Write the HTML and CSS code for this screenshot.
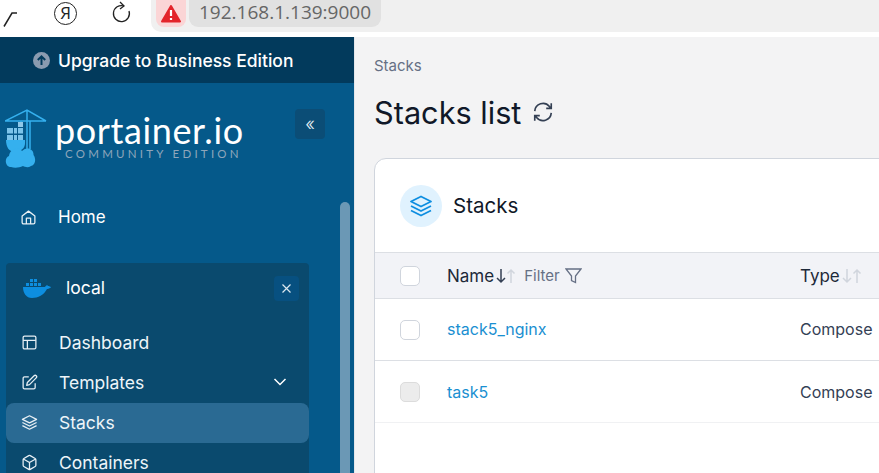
FILE: index.html
```html
<!DOCTYPE html>
<html lang="en">
<head>
  <meta charset="UTF-8" />
  <title>Portainer</title>
  <link rel="stylesheet" href="styles.css">
</head>
<body>

  <header class="browser-bar">
    <svg class="back-icon" width="16" height="18" viewBox="0 0 16 18"><path d="M1 16.500 L9 3 L14 3" fill="none" stroke="#222" stroke-width="1.500"/></svg>
    <span class="yandex">Я</span>
    <svg class="reload-icon" width="20" height="22" viewBox="0 0 20 22"><path d="M13 5 A8 8 0 1 0 18 10" fill="none" stroke="#222" stroke-width="1.300"/><path d="M9 1 L13 5 L9 8" fill="none" stroke="#222" stroke-width="1.300"/></svg>
    <div class="address">
      <span class="warn">
        <svg width="20" height="18" viewBox="0 0 20 18"><path d="M10 1 L19 16.500 H1 Z" fill="#e3242b" stroke="#e3242b" stroke-width="2" stroke-linejoin="round"/><path d="M10 5 V11 M10 13 V15" stroke="#fff" stroke-width="2.200"/></svg>
      </span>
      <span class="url">192.168.1.139:9000</span>
    </div>
  </header>

  <div class="app">
    <aside class="sidebar">
      <div class="upgrade">
        <svg width="17" height="17" viewBox="0 0 17 17"><circle cx="8.500" cy="8.500" r="8.500" fill="#8a9bb0"/><path d="M8.500 13 V4.500 M4.800 8 L8.500 4.300 L12.200 8" fill="none" stroke="#023a5c" stroke-width="2"/></svg>
        <span>Upgrade to Business Edition</span>
      </div>

      <div class="brand">
        <svg class="brand-mark" width="42" height="60" viewBox="0 0 42 60">
          <path d="M0 12 H41 M0 12 L22 1 L41 12 M22 1 V40 M25 12 V40" fill="none" stroke="#35b0ee" stroke-width="1.500"/>
          <path d="M16 12 V13" stroke="#35b0ee" stroke-width="1.200"/>
          <rect x="13" y="13" width="5" height="5" fill="#8fc8e8"/>
          <path d="M2 19 H8 V24.500 H2 Z M9 19 H12 V24.500 H9 Z M13 19 H18 V24.500 H13 Z M2 26 H8 V32 H2 Z M9 26 H12 V32 H9 Z M13 26 H18 V32 H13 Z" fill="#7cc4ea"/>
          <path d="M1 31 H20 C20.500 37 19 42 10 43 C4 43 1 38 1 31 Z" fill="#35b0ee"/>
          <path d="M6 58 C0 58 -1 49 4 47 C5 40 13 37 17 42 C22 37 29 40 28.500 46 C31 49 31 56 26 57 C23 59 20 58 18 57 C14 59 9 59 6 58 Z" fill="#35b0ee"/>
        </svg>
        <div class="brand-text">
          <div class="brand-name">portainer.io</div>
          <div class="brand-edition">COMMUNITY EDITION</div>
        </div>
        <button class="collapse">«</button>
      </div>

      <a class="nav-home">
        <svg class="ico" viewBox="0 0 24 24"><path d="M3 10 L12 3 L21 10 V19 A2 2 0 0 1 19 21 H5 A2 2 0 0 1 3 19 Z M9 21 V13 H15 V21"/></svg>
        <span>Home</span>
      </a>

      <div class="env">
        <div class="env-head">
          <svg class="whale" width="28" height="20" viewBox="0 0 28 20">
            <path d="M0 9 H22 C23 7 25 7 25 8 C26 8 27.500 8.500 28 9.500 C26 11 24.500 11 24 11 C21 17 15 20 9 20 C3 20 0 15 0 9 Z" fill="#0d8ee0"/>
            <path d="M3 5 H6 V8 H3 Z M7 5 H10 V8 H7 Z M11 5 H14 V8 H11 Z M15 5 H18 V8 H15 Z M7 1 H10 V4 H7 Z M11 1 H14 V4 H11 Z" fill="#0d8ee0"/>
          </svg>
          <span class="env-name">local</span>
          <button class="env-close">
            <svg width="11" height="11" viewBox="0 0 11 11"><path d="M1.500 1.500 L9.500 9.500 M9.500 1.500 L1.500 9.500" stroke="#dbe7ef" stroke-width="1.200"/></svg>
          </button>
        </div>

        <a class="nav-item">
          <svg class="ico" viewBox="0 0 24 24"><rect x="3" y="3" width="18" height="18" rx="2"/><path d="M3 9 H21 M9 9 V21"/></svg>
          <span>Dashboard</span>
        </a>
        <a class="nav-item">
          <svg class="ico" viewBox="0 0 24 24"><path d="M11 4 H5 A2 2 0 0 0 3 6 V19 A2 2 0 0 0 5 21 H18 A2 2 0 0 0 20 19 V13"/><path d="M18.500 2.500 A2.100 2.100 0 0 1 21.500 5.500 L12 15 L8 16 L9 12 Z"/></svg>
          <span>Templates</span>
          <svg class="chevron" width="14" height="8" viewBox="0 0 14 8"><path d="M1.500 1 L7 6.500 L12.500 1" fill="none" stroke="#fff" stroke-width="1.500"/></svg>
        </a>
        <a class="nav-item active">
          <svg class="ico" viewBox="0 0 24 24"><path d="M12 2.500 L22 7.500 L12 12.500 L2 7.500 Z M2 12 L12 17 L22 12 M2 16.500 L12 21.500 L22 16.500"/></svg>
          <span>Stacks</span>
        </a>
        <a class="nav-item">
          <svg class="ico" viewBox="0 0 24 24"><path d="M21 16 V8 A2 2 0 0 0 20 6.300 L13 2.300 A2 2 0 0 0 11 2.300 L4 6.300 A2 2 0 0 0 3 8 V16 A2 2 0 0 0 4 17.700 L11 21.700 A2 2 0 0 0 13 21.700 L20 17.700 A2 2 0 0 0 21 16 Z M3.300 7 L12 12 L20.700 7 M12 22 V12"/></svg>
          <span>Containers</span>
        </a>
      </div>

      <div class="scroll-thumb"></div>
    </aside>

    <main class="content">
      <div class="crumb">Stacks</div>
      <div class="title-row">
        <h1>Stacks list</h1>
        <svg class="refresh" width="22" height="22" viewBox="0 0 24 24"><path d="M3 11 A9 9 0 0 1 19 6 L21 8 M21 2.500 V8 H15.500 M21 13 A9 9 0 0 1 5 18 L3 16 M3 21.500 V16 H8.500"/></svg>
      </div>

      <section class="card">
        <div class="card-head">
          <span class="card-icon">
            <svg width="24" height="24" viewBox="0 0 24 24"><path d="M12 2.500 L22 7.500 L12 12.500 L2 7.500 Z M2 12 L12 17 L22 12 M2 16.500 L12 21.500 L22 16.500"/></svg>
          </span>
          <h2>Stacks</h2>
        </div>

        <div class="row row-head">
          <span class="check"></span>
          <div class="cell-name">
            <span class="col-title">Name</span>
            <svg class="sort" width="22" height="16" viewBox="0 0 22 16"><path d="M6 1 V14 M2 10 L6 14 L10 10" fill="none" stroke="#344054" stroke-width="1.500"/><path d="M16 15 V2 M12.500 5.500 L16 2 L19.500 5.500" fill="none" stroke="#d0d5dd" stroke-width="1.500"/></svg>
            <span class="filter">Filter</span>
            <svg class="funnel" width="17" height="16" viewBox="0 0 17 16"><path d="M1 1 H16 L10.500 8 V14.500 L6.500 12.500 V8 Z" fill="none" stroke="#667085" stroke-width="1.300"/></svg>
          </div>
          <div class="cell-type">
            <span class="col-title">Type</span>
            <svg class="sort" width="22" height="16" viewBox="0 0 22 16"><path d="M6 1 V14 M2 10 L6 14 L10 10 M16 15 V2 M12.500 5.500 L16 2 L19.500 5.500" fill="none" stroke="#d0d5dd" stroke-width="1.500"/></svg>
          </div>
        </div>

        <div class="row row-first">
          <span class="check"></span>
          <a class="stack-link">stack5_nginx</a>
          <span class="cell-type">Compose</span>
        </div>
        <div class="row row-last">
          <span class="check check-disabled"></span>
          <a class="stack-link">task5</a>
          <span class="cell-type">Compose</span>
        </div>
      </section>
    </main>
  </div>

</body>
</html>
```
FILE: styles.css
```css
* {
  box-sizing: border-box;
  margin: 0;
  padding: 0;
}

html, body {
  height: 100%;
  overflow: hidden;
}

body {
  font-family: Inter, 'Liberation Sans', sans-serif;
  background: #f3f3f4;
}

/* Browser chrome */
.browser-bar {
  height: 37px;
  background: #fff;
  display: flex;
  align-items: flex-start;
}

.back-icon {
  margin: 10px 0 0 3px;
}

.yandex {
  width: 23px;
  height: 23px;
  margin: 2px 0 0 35px;
  border: 1.300px solid #222;
  border-radius: 50%;
  font: 17px/20px 'Open Sans', sans-serif;
  color: #222;
  text-align: center;
}

.reload-icon {
  margin: 1px 0 0 34px;
}

.address {
  flex: 1;
  height: 32px;
  margin-left: 20px;
  padding-left: 5px;
  background: #f0f0f0;
  border-bottom-left-radius: 10px;
  display: flex;
  align-items: flex-start;
  gap: 3px;
}

.warn {
  width: 30px;
  height: 27px;
  background: #fbd5d6;
  border-radius: 0 0 8px 8px;
  display: flex;
  align-items: center;
  justify-content: center;
}

.url {
  height: 27px;
  padding: 0 10px;
  background: #e1e1e1;
  border-radius: 0 0 9px 9px;
  font: 19px/25px 'Open Sans', sans-serif;
  color: #666;
}

/* Layout */
.app {
  display: flex;
  height: 436px;
}

.sidebar {
  position: relative;
  width: 355px;
  flex-shrink: 0;
  background: #05598a;
  border-right: 1px solid #e3e6ea;
  overflow: hidden;
  color: #fff;
}

.upgrade {
  height: 46px;
  background: #023a5c;
  display: flex;
  align-items: center;
  gap: 8px;
  padding-left: 33px;
  font-size: 17.500px;
  font-weight: 500;
}

/* Logo */
.brand {
  display: flex;
  align-items: flex-start;
  height: 114px;
  padding: 26px 0 0 5px;
}

.brand-text {
  width: 190px;
  margin: 3px 0 0 8px;
}

.brand-name {
  font: 400 36px/36px Lato, sans-serif;
  letter-spacing: 0.600px;
}

.brand-edition {
  font: 400 11.500px/11px Lato, sans-serif;
  letter-spacing: 3.250px;
  color: #8ea6bb;
  margin-left: 10px;
  white-space: nowrap;
}

.collapse {
  width: 30px;
  height: 30px;
  margin-left: 50px;
  background: #0b4d76;
  border: 0;
  border-radius: 4px;
  color: #e8f0f5;
  font: 300 18px/24px Inter, sans-serif;
}

/* Navigation */
.ico {
  width: 17px;
  height: 17px;
  flex-shrink: 0;
  fill: none;
  stroke: #e8f0f5;
  stroke-width: 1.800;
  stroke-linejoin: round;
}

.nav-home {
  display: flex;
  align-items: center;
  height: 40px;
  padding-left: 20px;
  gap: 21px;
  font-size: 17px;
}

.env {
  width: 303px;
  height: 240px;
  margin: 26px 0 0 6px;
  background: #0a4a6e;
  border-radius: 4px 4px 0 0;
}

.env-head {
  display: flex;
  align-items: center;
  height: 50px;
  margin-bottom: 10px;
  padding: 0 10px 0 17px;
}

.whale {
  flex-shrink: 0;
}

.env-name {
  flex: 1;
  margin: 0 0 2px 15px;
  font-size: 17.500px;
}

.env-close {
  width: 25px;
  height: 25px;
  background: #075080;
  border: 0;
  border-radius: 4px;
  display: flex;
  align-items: center;
  justify-content: center;
}

.nav-item {
  display: flex;
  align-items: center;
  height: 40px;
  padding: 0 22px 2px 15px;
  gap: 21px;
  border-radius: 8px;
  font-size: 17.500px;
  color: #eef5f9;
}

.nav-item .chevron {
  margin-left: auto;
}

.nav-item.active {
  background: #2a6a93;
}

.scroll-thumb {
  position: absolute;
  top: 165px;
  left: 340px;
  width: 10px;
  height: 300px;
  background: #6b98b5;
  border-radius: 5px 5px 0 0;
}

/* Content */
.content {
  flex: 1;
  min-width: 0;
  padding: 20px 0 0 19px;
  overflow: hidden;
}

.crumb {
  font-size: 15px;
  line-height: 17px;
  color: #667085;
}

.title-row {
  display: flex;
  align-items: center;
  gap: 11px;
  height: 40px;
  margin-top: 18px;
}

h1 {
  font-size: 30.700px;
  font-weight: 400;
  color: #101828;
}

.refresh {
  fill: none;
  stroke: #344054;
  stroke-width: 1.800;
}

.card {
  width: 640px;
  height: 400px;
  margin-top: 26px;
  background: #fff;
  border: 1px solid #d0d5dd;
  border-radius: 12px 0 0 0;
}

.card-head {
  height: 93px;
  padding-left: 25px;
  display: flex;
  align-items: center;
  gap: 11px;
}

.card-icon {
  width: 42px;
  height: 42px;
  border-radius: 50%;
  background: #e0f2fe;
  display: flex;
  align-items: center;
  justify-content: center;
}

.card-icon svg {
  fill: none;
  stroke: #0d8ee0;
  stroke-width: 1.800;
  stroke-linejoin: round;
}

h2 {
  font-size: 20.500px;
  font-weight: 400;
  color: #101828;
}

.row {
  display: grid;
  grid-template-columns: 47px 353px 1fr;
  align-items: center;
  height: 63px;
  padding-left: 25px;
  border-top: 1px solid #dcdfe4;
  font-size: 16px;
  color: #344054;
}

.row-head {
  height: 46px;
  background: #f2f3f7;
  color: #1d2939;
  font-size: 17px;
}

.row-first {
  height: 62px;
}

.row-first .stack-link,
.row-first .cell-type {
  margin-bottom: 2px;
}

.row-last {
  border-bottom: 1px solid #f0f1f3;
}

.check {
  width: 20px;
  height: 20px;
  background: #fff;
  border: 1px solid #d0d5dd;
  border-radius: 5px;
}

.check-disabled {
  background: #ececec;
  border-color: #dcdcdc;
}

.cell-name,
.row-head .cell-type {
  display: flex;
  align-items: center;
}

.filter {
  margin: 0 5px 0 7px;
  font-size: 15px;
  color: #667085;
}

.sort {
  margin-left: 1px;
}

.stack-link {
  color: #1a8fd1;
}
```
